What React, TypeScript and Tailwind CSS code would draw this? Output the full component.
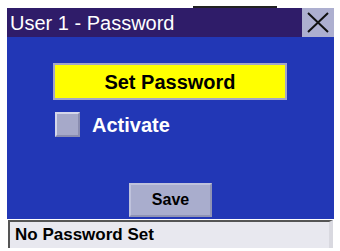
export default function App() {
  return (
    <div
      className="w-[340px] h-[251px] bg-white relative overflow-hidden"
      style={{ fontFamily: '"Liberation Sans", Arial, sans-serif' }}
    >
      {/* stray line at top of the capture */}
      <div className="absolute left-[193px] top-[6px] w-[84px] h-[2px] bg-[#222]" />

      <div className="pt-[8px] pl-[7px] w-[334px]">
        {/* title bar */}
        <div className="flex h-[29px] bg-[#2f1c69]">
          <div className="flex-1 pl-[3px] flex items-center text-white text-[20px] leading-none">
            User 1 - Password
          </div>
          <button className="w-[32px] h-[29px] bg-[#adafd0] flex items-center justify-center">
            <svg width="22" height="21" viewBox="0 0 22 21">
              <path d="M1 1 L21 20 M21 1 L1 20" stroke="#111" strokeWidth="2" fill="none" />
            </svg>
          </button>
        </div>

        {/* body */}
        <div className="h-[182px] bg-[#2237b6] flex flex-col">
          <div className="mt-[26px] ml-[46px] w-[234px] h-[37px] bg-[#ffff00] border-2 border-[#a3a6c6] flex items-center justify-center text-[20px] font-bold text-black">
            Set Password
          </div>
          <div className="mt-[12px] ml-[48px] flex items-center">
            <div className="w-[25px] h-[25px] bg-[#a6a9c9] border-2 border-t-[#d4d6ea] border-l-[#d4d6ea] border-r-[#8a8db0] border-b-[#8a8db0]" />
            <span className="ml-[12px] text-[20px] font-bold text-white leading-none">Activate</span>
          </div>
          <div className="mt-auto mb-[2px] ml-[122px] w-[83px] h-[34px] bg-[#a9adcd] border-2 border-[#bfc2dc] border-b-[#8f93b5] border-r-[#8f93b5] flex items-center justify-center text-[16px] font-bold text-black">
            Save
          </div>
        </div>

        {/* status bar */}
        <div className="mt-[1px] ml-[1px] w-[325px] h-[28px] bg-[#e8e8ef] border-t-2 border-l-2 border-t-[#555] border-l-[#555] border-r-4 border-r-[#d9d9e0] flex items-center pl-[5px] text-[17px] font-bold text-black">
          No Password Set
        </div>
      </div>
    </div>
  );
}
